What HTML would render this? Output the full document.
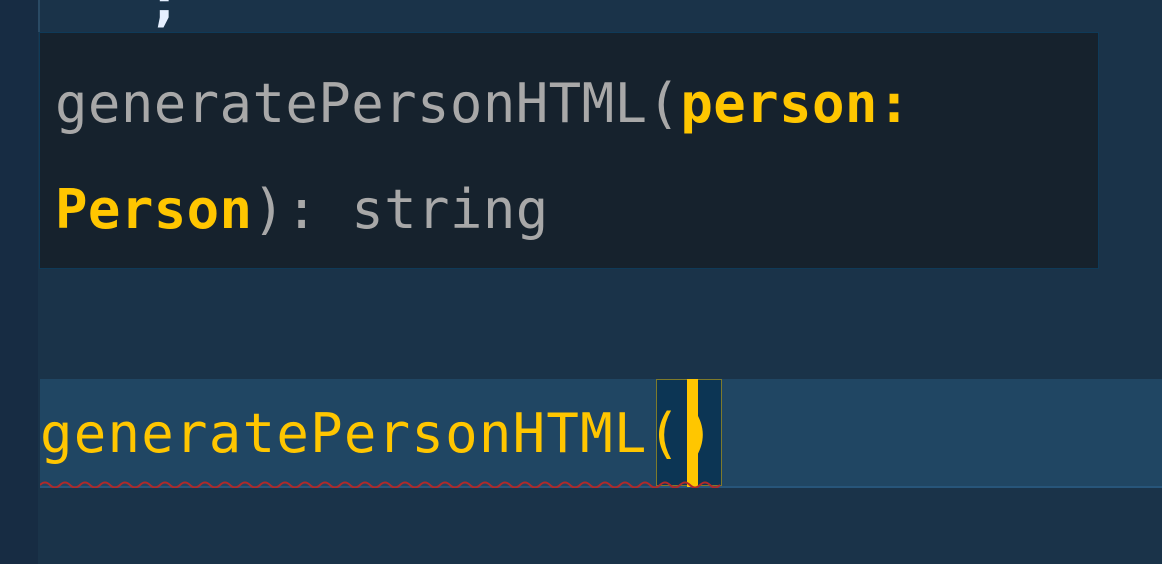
<!DOCTYPE html>
<html><head><style>
body{margin:0;width:1162px;height:564px;background:#1a3349;position:relative;overflow:hidden;font-family:"DejaVu Sans Mono","Liberation Mono",monospace;}
.gut{position:absolute;left:0;top:0;width:38px;height:564px;background:#172c43;}
.gl{position:absolute;left:38px;top:0;width:2px;height:32px;background:#2a4a64;}
.semi{position:absolute;left:148px;top:-30px;font-size:54px;color:#e6f0ff;font-weight:bold;}
.tip{position:absolute;left:39px;top:32px;width:1058px;height:235px;background:#16222d;border:1px solid #0f3a58;}
.t{position:absolute;left:15px;font-size:54px;color:#a8a8a8;white-space:pre;line-height:1;letter-spacing:0.4px;}
.y{color:#ffc600;font-weight:bold;}
.cl{position:absolute;left:40px;top:379px;width:1122px;height:107px;background:#204663;border-bottom:2px solid #27557a;}
.code{position:absolute;left:40px;top:407px;font-size:54px;color:#ffc600;white-space:pre;line-height:1;letter-spacing:1.25px;}
.bb{position:absolute;left:656px;top:379px;width:64px;height:105px;background:#0c3554;border:1px solid #7d7a2c;}
.cur{position:absolute;left:687px;top:379px;width:11px;height:108px;background:#ffc600;}
.wave{position:absolute;left:40px;top:480px;}
</style></head><body>
<div class="gut"></div><div class="gl"></div>
<div class="semi">;</div>
<div class="tip">
<div class="t" style="top:44px">generatePersonHTML(<span class="y">person:</span></div>
<div class="t" style="top:150px"><span class="y">Person</span>): string</div>
</div>
<div class="cl"></div>
<div class="bb"></div>
<div class="code">generatePersonHTML()</div>
<div class="cur"></div>
<svg class="wave" width="682" height="8"><path d="M0 5 Q5 0 10 5 T20 5 T30 5 T40 5 T50 5 T60 5 T70 5 T80 5 T90 5 T100 5 T110 5 T120 5 T130 5 T140 5 T150 5 T160 5 T170 5 T180 5 T190 5 T200 5 T210 5 T220 5 T230 5 T240 5 T250 5 T260 5 T270 5 T280 5 T290 5 T300 5 T310 5 T320 5 T330 5 T340 5 T350 5 T360 5 T370 5 T380 5 T390 5 T400 5 T410 5 T420 5 T430 5 T440 5 T450 5 T460 5 T470 5 T480 5 T490 5 T500 5 T510 5 T520 5 T530 5 T540 5 T550 5 T560 5 T570 5 T580 5 T590 5 T600 5 T610 5 T620 5 T630 5 T640 5 T650 5 T660 5 T670 5 T680 5" fill="none" stroke="#b02a2a" stroke-width="2"/></svg>
</body></html>
